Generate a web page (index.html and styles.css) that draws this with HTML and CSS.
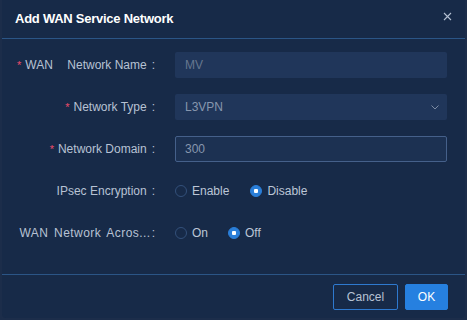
FILE: index.html
```html
<!DOCTYPE html>
<html>
<head>
<meta charset="utf-8">
<link rel="stylesheet" href="styles.css">
</head>
<body>
<div class="modal">
  <div class="header">
    <span class="title">Add WAN Service Network</span>
    <svg class="close" width="9" height="9" viewBox="0 0 9 9"><path d="M1 1L8 8M8 1L1 8" stroke="#b4c0d2" stroke-width="1.1" fill="none"/></svg>
  </div>
  <div class="body">
    <div class="row">
      <div class="label label-split"><span class="star">*</span><span class="wan">WAN</span><span class="grow"></span><span>Network Name</span><span class="colon">:</span></div>
      <div class="field"><div class="input filled">MV</div></div>
    </div>
    <div class="row">
      <div class="label"><span class="star">*</span>Network Type<span class="colon">:</span></div>
      <div class="field"><div class="input select">L3VPN<svg class="chev" width="8" height="5" viewBox="0 0 8 5"><path d="M0.5 0.5L4 4L7.5 0.5" stroke="#7c8ba3" stroke-width="1" fill="none"/></svg></div></div>
    </div>
    <div class="row">
      <div class="label"><span class="star">*</span>Network Domain<span class="colon">:</span></div>
      <div class="field"><div class="input bordered">300</div></div>
    </div>
    <div class="row">
      <div class="label">IPsec Encryption<span class="colon">:</span></div>
      <div class="field radios">
        <label class="radio radio-enable"><span class="dot"></span>Enable</label>
        <label class="radio"><span class="dot checked"></span>Disable</label>
      </div>
    </div>
    <div class="row">
      <div class="label"><span class="wide">WAN Network Acros...</span><span class="colon tight">:</span></div>
      <div class="field radios">
        <label class="radio radio-on"><span class="dot"></span>On</label>
        <label class="radio"><span class="dot checked"></span>Off</label>
      </div>
    </div>
  </div>
  <div class="footer">
    <button class="btn cancel">Cancel</button>
    <button class="btn ok">OK</button>
  </div>
</div>
</body>
</html>
```
FILE: styles.css
```css
html, body {
  margin: 0;
  padding: 0;
  background: #1c2d4a;
}
body {
  width: 467px;
  height: 320px;
  padding: 0 2px 2px 2px;
  box-sizing: border-box;
  font-family: "Liberation Sans", Arial, sans-serif;
  overflow: hidden;
}
.modal {
  height: 318px;
  background: #172a48;
  border-radius: 0 0 4px 4px;
  display: flex;
  flex-direction: column;
}
.header {
  height: 38px;
  border-bottom: 1px solid #2b5586;
  display: flex;
  align-items: center;
  justify-content: space-between;
  padding: 0 13px 0 13px;
}
.title {
  color: #ffffff;
  font-weight: bold;
  font-size: 13px;
  letter-spacing: -0.25px;
  margin-top: -2px;
}
.close {
  margin-top: -6px;
}
.body {
  flex: 1;
  padding-top: 13px;
}
.row {
  display: flex;
  align-items: center;
  height: 26px;
  margin-bottom: 16px;
}
.label {
  width: 153px;
  padding-left: 15px;
  box-sizing: border-box;
  text-align: right;
  font-size: 12px;
  color: #b7c2d4;
  white-space: nowrap;
  display: flex;
  justify-content: flex-end;
  align-items: center;
}
.label-split {
  justify-content: flex-start;
}
.wide {
  letter-spacing: 0.45px;
  word-spacing: 2px;
}
.grow {
  flex: 1;
}
.star {
  color: #ee4a6a;
  margin-right: 4px;
  font-size: 11px;
}
.colon {
  margin-left: 5px;
}
.colon.tight {
  margin-left: 1px;
}
.field {
  margin-left: 20px;
  width: 272px;
}
.input {
  height: 26px;
  box-sizing: border-box;
  border-radius: 2px;
  background: #20365a;
  padding-left: 10px;
  font-size: 12px;
  line-height: 26px;
  color: #8796ae;
  position: relative;
}
.filled {
  color: #66768f;
}
.bordered {
  border: 1px solid #45608a;
  background: #1c3152;
  line-height: 24px;
  padding-left: 9px;
}
.chev {
  position: absolute;
  right: 8px;
  top: 11px;
}
.radios {
  display: flex;
  align-items: center;
}
.radio {
  display: flex;
  align-items: center;
  font-size: 12px;
  color: #bcc6d6;
}
.radio-enable {
  margin-right: 21px;
}
.radio-on {
  margin-right: 20px;
}
.dot {
  width: 12px;
  height: 12px;
  box-sizing: border-box;
  border: 1px solid #33507a;
  border-radius: 50%;
  margin-right: 5px;
  position: relative;
}
.dot.checked {
  background: #2a7ed8;
  border-color: #2a7ed8;
}
.dot.checked::after {
  content: "";
  position: absolute;
  left: 3px;
  top: 3px;
  width: 4px;
  height: 4px;
  border-radius: 1px;
  background: #ffffff;
}
.footer {
  border-top: 1px solid #2b5586;
  height: 44px;
  box-sizing: border-box;
  display: flex;
  justify-content: flex-end;
  align-items: flex-start;
  padding: 9px 17px 0 0;
  gap: 7px;
}
.btn {
  height: 26px;
  border-radius: 2px;
  font-family: "Liberation Sans", Arial, sans-serif;
  font-size: 12px;
  padding: 0;
  cursor: pointer;
}
.cancel {
  width: 65px;
  background: transparent;
  border: 1px solid #2e79cf;
  color: #b7c2d4;
}
.ok {
  width: 43px;
  background: #2680e0;
  border: 1px solid #2680e0;
  color: #ffffff;
}
```
